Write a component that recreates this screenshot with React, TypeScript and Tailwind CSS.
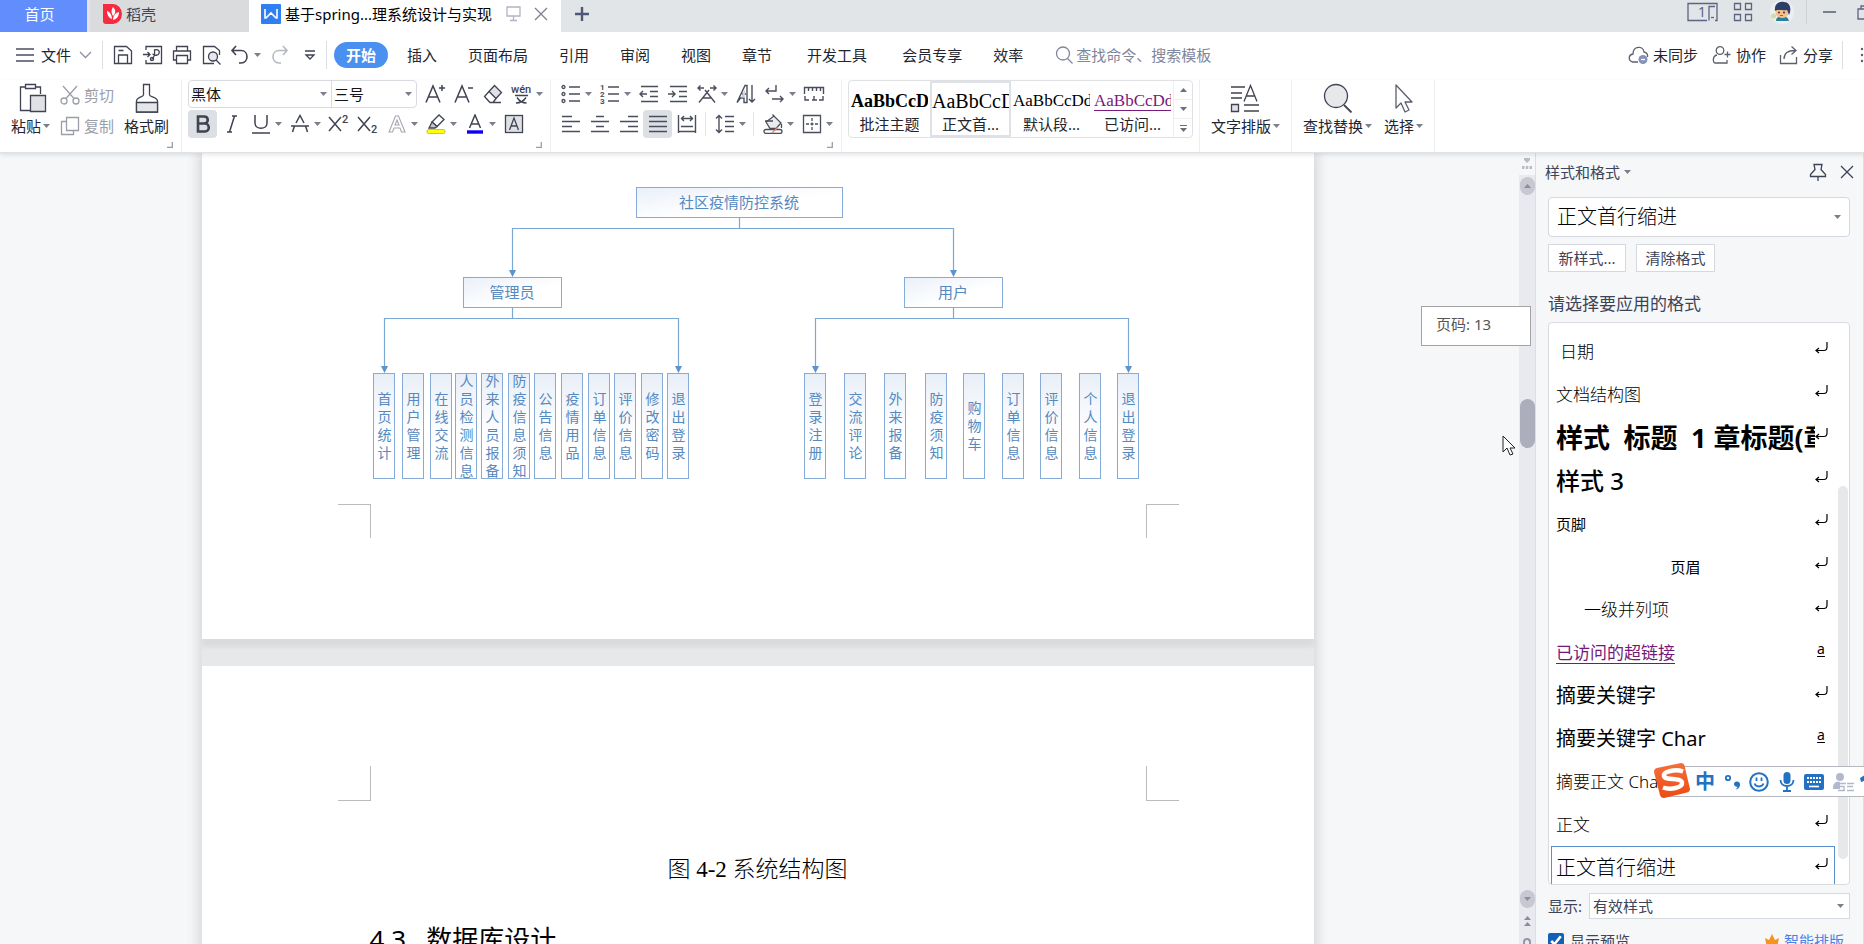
import type { ReactNode } from "react";

/* ---------- shared pieces ---------- */

function Svg({ children, w = 20, h = 20, className = "" }: { children: ReactNode; w?: number; h?: number; className?: string }) {
  return (
    <svg width={w} height={h} viewBox={`0 0 ${w} ${h}`} fill="none" stroke="currentColor" strokeWidth={1.3} className={`shrink-0 ${className}`} aria-hidden="true">
      {children}
    </svg>
  );
}

function Caret({ className = "text-[#7b7f8c]" }: { className?: string }) {
  return (
    <svg width="7" height="4" viewBox="0 0 7 4" className={`shrink-0 ${className}`} aria-hidden="true">
      <path d="M0 0h7L3.5 4z" fill="currentColor" />
    </svg>
  );
}

function Tool({ label, children, drop = false, active = false, className = "" }: { label: string; children: ReactNode; drop?: boolean; active?: boolean; className?: string }) {
  return (
    <div className="flex shrink-0 items-center">
      <button aria-label={label} className={`flex h-7 w-[29px] items-center justify-center ${active ? "rounded-sm bg-[#dcdfe4]" : ""} ${className}`}>
        {children}
      </button>
      {drop && (
        <span className="flex w-[10px] items-center">
          <Caret />
        </span>
      )}
    </div>
  );
}

function Sep() {
  return <span className="mx-1 h-6 w-px shrink-0 bg-[#e3e5e8]" />;
}

function Corner() {
  return (
    <svg width="6" height="6" viewBox="0 0 6 6" className="absolute right-2 bottom-1 text-[#9a9da8]" aria-hidden="true">
      <path d="M5.3 0v5.3H0" fill="none" stroke="currentColor" strokeWidth="1.3" />
    </svg>
  );
}

function BigTool({ label, children, drop = true }: { label: string; children: ReactNode; drop?: boolean }) {
  return (
    <button className="flex shrink-0 flex-col items-center gap-[3px] pt-[3px]">
      <span className="flex h-[30px] items-center">{children}</span>
      <span className="flex items-center gap-0.5 text-[15px] leading-5">
        {label}
        {drop && <Caret />}
      </span>
    </button>
  );
}

/* ---------- title bar ---------- */

function TitleBar() {
  return (
    <header className="flex h-8 shrink-0 items-stretch overflow-hidden bg-[#e2e5e7] text-[15px]">
      <button className="w-[87px] shrink-0 bg-[#618dfd] pr-2 pb-1 text-white">首页</button>
      <button className="ml-[3px] flex w-[159px] shrink-0 items-center gap-1 bg-[#dadbdd] pb-1 pl-[13px] text-[#3f4358]">
        <svg width="19" height="20" viewBox="0 0 19 20" aria-hidden="true">
          <path d="M0 0h10a9 10 0 0 1 0 20H3a3 3 0 0 1-3-3z" fill="#f9293f" />
          <path d="M10 3c3 3 3 6 0 9-2-3-2-6 0-9zM4 7c3 1 5 4 5 8-3-1-5-4-5-8zM16 8c0 4-2 7-6 8 0-4 2-7 6-8z" fill="#fff" />
        </svg>
        稻壳
      </button>
      <div className="flex w-[312px] shrink-0 items-center bg-white pb-1 pl-3">
        <svg width="20" height="20" viewBox="0 0 20 20" aria-hidden="true">
          <rect width="20" height="20" rx="1" fill="#2f7ff0" />
          <path d="M4 5v9h1l5-5 5 5h1V5" fill="none" stroke="#fff" strokeWidth="1.6" />
        </svg>
        <span className="ml-1 flex-1 whitespace-nowrap text-black">基于spring...理系统设计与实现</span>
        <Svg w={16} h={18} className="text-[#b1b5c2]">
          <path d="M1 2h13v9H1zM7.500 11v4M4 15.500h7" />
        </Svg>
        <button aria-label="关闭标签" className="mr-[13px] ml-3 text-[#7d8190]">
          <Svg w={14} h={14}>
            <path d="M1 1l12 12M13 1L1 13" />
          </Svg>
        </button>
      </div>
      <button aria-label="新建标签" className="ml-[13px] flex items-center pb-1 text-[#4d5878]">
        <Svg w={16} h={16}>
          <path d="M8 1v14M1 8h14" strokeWidth="2.400" />
        </Svg>
      </button>
      <div className="flex-1" />
      <div className="flex shrink-0 items-center pb-2 text-[#5d6480]">
        <Svg w={31} h={20}>
          <path d="M20 18.500H1v-17h29v17h-2M22 18.500v-14h6" />
          <text x="11" y="15" fontSize="14" fontFamily="Noto Sans" stroke="none" fill="currentColor">1</text>
          <path d="M24 15.500h3" />
        </Svg>
        <Svg w={20} h={20} className="ml-[15px]">
          <path d="M1.500 1.500h6v6h-6zM12.500 1.500h6v6h-6zM1.500 12.500h6v6h-6zM12.500 12.500h6v6h-6z" />
        </Svg>
        <svg width="24" height="24" viewBox="0 0 24 24" className="ml-[17px]" aria-label="头像">
          <circle cx="12" cy="12" r="12" fill="#eceef2" />
          <path d="M6 21c0-4 3-5 6-5s6 1 7 5z" fill="#2a7f9b" />
          <ellipse cx="12" cy="12.500" rx="6.500" ry="5.500" fill="#f3c28e" />
          <path d="M5 11C4 5 8 1 14 2c6 0 8 7 5 13-1-2-1-4-2-5-5 1-9-1-12 1z" fill="#2d3f68" />
          <circle cx="9" cy="12.500" r="1" fill="#5a2a2a" />
          <circle cx="14" cy="12.500" r="1" fill="#5a2a2a" />
          <path d="M10 15.500h3" stroke="#c0533a" />
          <circle cx="3.500" cy="16" r="2.500" fill="#c9dfa5" />
        </svg>
        <span className="ml-[12px] h-6 w-px bg-[#cfd2d7]" />
        <button aria-label="最小化" className="ml-4">
          <Svg w={14} h={14}>
            <path d="M0 7h13" strokeWidth="1.600" />
          </Svg>
        </button>
        <button aria-label="还原" className="-mr-2 ml-5">
          <Svg w={15} h={15}>
            <path d="M1 4h10v10H1zM4 4V1h10v10h-3" />
          </Svg>
        </button>
      </div>
    </header>
  );
}

/* ---------- menu row ---------- */

const menus: [string, string][] = [
  ["插入", ""],
  ["页面布局", ""],
  ["引用", ""],
  ["审阅", ""],
  ["视图", ""],
  ["章节", ""],
  ["开发工具", "ml-1"],
  ["会员专享", "ml-1"],
  ["效率", ""],
];

function MenuRow() {
  return (
    <nav className="flex h-12 shrink-0 items-center overflow-hidden pb-0.5 whitespace-nowrap text-[15px] text-[#22252f]">
      <button className="ml-4 flex items-center">
        <Svg w={18} h={16} className="text-[#4b4f5e]">
          <path d="M0 2h18M0 8h18M0 14h18" />
        </Svg>
        <span className="ml-[7px]">文件</span>
        <Svg w={13} h={8} className="ml-2 text-[#8e92a0]">
          <path d="M1 1l5.500 5.500L12 1" />
        </Svg>
      </button>
      <span className="ml-[10px] h-7 w-px bg-[#dcdee2]" />
      <div className="ml-[10px] flex items-center text-[#3f4352]">
        <button aria-label="保存">
          <Svg>
            <path d="M1.500 1.500h12l5 4.500v12.500h-17zM5.500 18v-8h9v8M5.500 5.500h5" />
          </Svg>
        </button>
        <button aria-label="输出为PDF" className="ml-[10px]">
          <Svg>
            <path d="M3 5V1.500h15.500v17H3V15M0 9.500h7M4.500 7L7 9.500 4.500 12M8.500 14.500c3-2 3.500-5 3-9.500 4-1 5.500 1 4.500 3.500s-4 2-6.500.5" />
            <circle cx="9" cy="14" r="1.600" />
          </Svg>
        </button>
        <button aria-label="打印" className="ml-[9px]">
          <Svg>
            <path d="M4.500 6V1.500h11V6M4.500 15h-3V6h17v9h-3M4.500 10.500h11v8h-11z" />
          </Svg>
        </button>
        <button aria-label="打印预览" className="ml-[10px]">
          <Svg>
            <path d="M12 18.500H1.500v-17h11l5 4V10" />
            <circle cx="11" cy="11.500" r="4.500" fill="#e6e8eb" />
            <path d="M14 15l4.500 4.500" />
          </Svg>
        </button>
        <button aria-label="撤销" className="ml-2 flex items-center gap-1">
          <Svg>
            <path d="M6 1L2 5.500l4 4.500M2 5.500h9c8 0 8 12.500 0 12.500H9" strokeWidth="1.600" />
          </Svg>
          <Caret />
        </button>
        <button aria-label="重做" className="ml-[9px] text-[#b6b9c2]">
          <Svg>
            <path d="M13 1l4 4.500-4 4.500M17 5.500H9c-8 0-8 12.500 0 12.500h2" strokeWidth="1.600" />
          </Svg>
        </button>
        <button aria-label="自定义工具栏" className="ml-[14px]">
          <Svg w={12} h={12}>
            <path d="M1 2h10M2 6h8l-4 4z" />
          </Svg>
        </button>
      </div>
      <span className="ml-[10px] h-7 w-px bg-[#dcdee2]" />
      <button className="ml-[7px] h-[26px] w-[54px] rounded-full bg-[#4a90f1] font-bold text-white">开始</button>
      <div className="ml-[19px] flex gap-[31px]">
        {menus.map(([name, cls]) => (
          <button key={name} className={cls}>
            {name}
          </button>
        ))}
      </div>
      <button className="ml-8 flex items-center text-[#7f869c]">
        <Svg>
          <circle cx="8" cy="8.500" r="6.500" />
          <path d="M12.500 13.500l5 5" />
        </Svg>
        <span className="ml-px">查找命令、搜索模板</span>
      </button>
      <div className="flex-1" />
      <button className="flex items-center gap-1">
        <Svg w={21} className="text-[#5b5f6e]">
          <path d="M10 17H5c-5-1-5-7 0-8C5 1 15 0 16 7c3 .5 4 3 3.500 5" />
          <circle cx="15" cy="14.500" r="4.500" fill="#8593bb" stroke="none" />
          <path d="M13 14.500h4" stroke="#fff" />
        </Svg>
        未同步
      </button>
      <button className="ml-[14px] flex items-center gap-[5px]">
        <Svg w={19} className="text-[#5b5f6e]">
          <circle cx="8" cy="5.500" r="3.800" />
          <path d="M5 10c-5 1-4 8-2 8h12v-3M12.500 9.500h6M15.500 6.500v6" />
        </Svg>
        协作
      </button>
      <button className="ml-[13px] flex items-center gap-[5px]">
        <Svg w={19} className="text-[#5b5f6e]">
          <path d="M1.500 10v8.500h16V12M5 14c0-6 4-8.500 11-8.500M12.500 1.500l4.500 4-4.500 4" />
        </Svg>
        分享
      </button>
      <span className="ml-[9px] h-7 w-px bg-[#dcdee2]" />
      <button aria-label="更多" className="-mr-px ml-4 text-[#5b5f6e]">
        <svg width="6" height="18" viewBox="0 0 6 18" fill="currentColor" aria-hidden="true">
          <circle cx="3" cy="3" r="1.200" />
          <circle cx="3" cy="9" r="1.200" />
          <circle cx="3" cy="15" r="1.200" />
        </svg>
      </button>
    </nav>
  );
}

/* ---------- ribbon ---------- */

function FontTools() {
  return (
    <section className="relative flex w-[369px] shrink-0 flex-col gap-0.5 border-r border-[#eceef1] pl-[6px] text-[#3f4352]">
      <div className="flex h-7 items-center">
        <div className="flex h-7 w-[229px] items-center rounded-sm border border-[#d9dbe0] text-[15px] text-[#14161c]">
          <div className="flex h-full w-[143px] items-center border-r border-[#d9dbe0] pr-1">
            <select aria-label="字体" className="h-full min-w-0 flex-1 appearance-none pl-0.5 outline-none">
              <option>黑体</option>
            </select>
            <Caret />
          </div>
          <div className="flex h-full flex-1 items-center pr-1">
            <select aria-label="字号" className="h-full min-w-0 flex-1 appearance-none pl-0.5 outline-none">
              <option>三号</option>
            </select>
            <Caret />
          </div>
        </div>
        <div className="ml-[3px] flex">
          <Tool label="增大字号">
            <Svg>
              <path d="M1 18.500L8 2l7 16.500M3.500 13h9M14 4h6M17 1v6" strokeWidth="1.500" />
            </Svg>
          </Tool>
          <Tool label="减小字号">
            <Svg>
              <path d="M1 18.500L8 2l7 16.500M3.500 13h9M14 4h5" strokeWidth="1.500" />
            </Svg>
          </Tool>
          <Tool label="清除格式">
            <Svg>
              <path d="M6 7.500l5.500-6 7 7-5.500 6z" fill="#dfe1e6" />
              <path d="M6 7.500l-4.500 5 5.500 6h3l3-4M8 18.500h10" />
            </Svg>
          </Tool>
          <Tool label="拼音指南" drop>
            <Svg w={22}>
              <text x="0" y="9" fontSize="11" fontFamily="Roboto" fontWeight="500" stroke="none" fill="currentColor">wén</text>
              <path d="M4 11.500h13M6 13.500c2 3 5 5.500 9.500 5.500M15 13.500c-2 3-5 5.500-10 5.500" strokeWidth="1.400" />
            </Svg>
          </Tool>
        </div>
      </div>
      <div className="flex">
        <Tool label="加粗" active>
          <Svg>
            <path d="M5 2.500h6c5 0 5 7 0 7H5zM5 9.500h7c5 0 5 8 0 8H5z" strokeWidth="2.600" />
          </Svg>
        </Tool>
        <Tool label="倾斜">
          <Svg>
            <path d="M10 2h5M5 18h5M12.500 2l-5 16" strokeWidth="1.500" />
          </Svg>
        </Tool>
        <Tool label="下划线" drop>
          <Svg>
            <path d="M4 1v8c0 7 12 7 12 0V1M1 19h18" strokeWidth="1.500" />
          </Svg>
        </Tool>
        <Tool label="删除线" drop>
          <Svg>
            <path d="M6 9l4-7.500L14 9M1 12h18M4.500 12L2.500 18M15.500 12l2 6" strokeWidth="1.500" />
          </Svg>
        </Tool>
        <Tool label="上标">
          <Svg w={22}>
            <path d="M1 3l12 14M13 3L1 17" strokeWidth="1.500" />
            <text x="14" y="9" fontSize="11" fontFamily="Roboto" fontWeight="500" stroke="none" fill="currentColor">2</text>
          </Svg>
        </Tool>
        <Tool label="下标">
          <Svg w={22}>
            <path d="M1 3l12 14M13 3L1 17" strokeWidth="1.500" />
            <text x="14" y="19" fontSize="11" fontFamily="Roboto" fontWeight="500" stroke="none" fill="currentColor">2</text>
          </Svg>
        </Tool>
        <Tool label="文字效果" drop className="text-[#a4a7b0]">
          <Svg>
            <path d="M2 18L8.500 2h3L18 18h-3.500l-1.500-4H7l-1.500 4zM8 11h4l-2-5z" strokeWidth="1.100" />
          </Svg>
        </Tool>
        <Tool label="突出显示" drop>
          <Svg w={22}>
            <path d="M7 8l7-7 5 4.500-7 7z" />
            <path d="M7 8l5 4.500-2 1.500H4z" fill="#c8cad2" />
            <rect x="2" y="15.500" width="18" height="4" rx="1.500" fill="#ffff00" stroke="#b9b930" strokeWidth=".8" />
          </Svg>
        </Tool>
        <Tool label="字体颜色" drop>
          <Svg>
            <path d="M4.500 14L10 1l5.500 13M6.500 10h7" strokeWidth="1.500" />
            <path d="M2 18h16" stroke="#0d00f2" strokeWidth="3.400" />
          </Svg>
        </Tool>
        <Tool label="字符底纹">
          <Svg>
            <rect x="1.500" y="1.500" width="17" height="17" fill="#dfe1e6" />
            <path d="M5.500 16L10 4l4.500 12M7 12h6" />
          </Svg>
        </Tool>
      </div>
      <Corner />
    </section>
  );
}

function ParagraphTools() {
  return (
    <section className="relative flex w-[291px] shrink-0 flex-col gap-0.5 border-r border-[#eceef1] pl-[5px] text-[#4a4e5c]">
      <div className="flex">
        <Tool label="项目符号" drop>
          <Svg>
            <path d="M8 3h11M8 10h11M8 17h11" strokeWidth="1.500" />
            <circle cx="2.500" cy="3" r="1.500" />
            <circle cx="2.500" cy="10" r="1.500" />
            <circle cx="2.500" cy="17" r="1.500" />
          </Svg>
        </Tool>
        <Tool label="编号" drop>
          <Svg>
            <path d="M8 3h11M8 10h11M8 17h11" strokeWidth="1.500" />
            <g fontSize="8" fontFamily="Roboto" fontWeight="700" stroke="none" fill="currentColor">
              <text x="0" y="6">1</text>
              <text x="0" y="13">2</text>
              <text x="0" y="20">3</text>
            </g>
          </Svg>
        </Tool>
        <Tool label="减少缩进">
          <Svg>
            <path d="M2 2.500h17M11 7.500h8M11 12.500h8M2 17.500h17M8 10H1M4 7l-3 3 3 3" strokeWidth="1.400" />
          </Svg>
        </Tool>
        <Tool label="增加缩进">
          <Svg>
            <path d="M2 2.500h17M11 7.500h8M11 12.500h8M2 17.500h17M0 10h7M4 7l3 3-3 3" strokeWidth="1.400" />
          </Svg>
        </Tool>
        <Tool label="中文版式" drop>
          <Svg>
            <path d="M2 18.500L12 6M18 18.500L8 6M5.500 14h9M1 4h6M3.500 1.500L1 4l2.500 2.500M13 4h6M16.500 1.500L19 4l-2.500 2.500" strokeWidth="1.400" />
          </Svg>
        </Tool>
        <Tool label="排序">
          <Svg>
            <path d="M1 18.500L9 1.500h2v17H8V14H4.500zM6 10h4M16 1v17M13 15l3 3 3-3" fill="none" strokeWidth="1.400" />
            <path d="M5 13.500L9 5v8.500z" fill="#cfd1d8" stroke="none" />
          </Svg>
        </Tool>
        <Tool label="换行" drop>
          <Svg>
            <path d="M11 1v6H1M4 4L1 7l3 3M7 15h11M15 12l3 3-3 3" strokeWidth="1.400" />
          </Svg>
        </Tool>
        <Tool label="制表位">
          <Svg w={22}>
            <path d="M1.500 10V3.500h19V10M5.500 4v3M9.500 4v3M13.500 4v3M17.500 4v3M2 12v4h4M11 12v4M9 16h5M20 12v4h-4" strokeWidth="1.400" />
          </Svg>
        </Tool>
      </div>
      <div className="flex items-center">
        <Tool label="左对齐">
          <Svg>
            <path d="M1 2.500h10M1 7.500h18M1 12.500h10M1 17.500h18" />
          </Svg>
        </Tool>
        <Tool label="居中">
          <Svg>
            <path d="M6 2.500h8M1 7.500h18M6 12.500h8M1 17.500h18" />
          </Svg>
        </Tool>
        <Tool label="右对齐">
          <Svg>
            <path d="M9 2.500h10M1 7.500h18M9 12.500h10M1 17.500h18" />
          </Svg>
        </Tool>
        <Tool label="两端对齐" active>
          <Svg>
            <path d="M1 2.500h18M1 7.500h18M1 12.500h18M1 17.500h18" strokeWidth="1.500" />
          </Svg>
        </Tool>
        <Tool label="分散对齐">
          <Svg>
            <path d="M1.500 1v18M18.500 1v18M4 4.500h12M7 2L4.500 4.500 7 7M13 2l2.500 2.500L13 7M4 12.500h12M1.500 17.500h17" strokeWidth="1.400" />
          </Svg>
        </Tool>
        <Sep />
        <Tool label="行距" drop>
          <Svg>
            <path d="M4 2v16M1 4.500l3-3 3 3M1 15.500l3 3 3-3M10 2.500h9M10 7.500h9M10 12.500h9M10 17.500h9" strokeWidth="1.400" />
          </Svg>
        </Tool>
        <Sep />
        <Tool label="底纹颜色" drop>
          <Svg>
            <path d="M3 8l8-6 7 7-5 5.500H7z" fill="#e9ebee" />
            <path d="M2 7h8M11 2L9.500.5M18.500 10v4" />
            <rect x="1" y="15.500" width="18" height="4" rx="2" fill="#fff" />
            <path d="M9 19l6-6" stroke="#e08070" />
          </Svg>
        </Tool>
        <Tool label="边框" drop>
          <Svg>
            <path d="M1.500 1.500h17v17h-17z" />
            <path d="M10 4v12M4 10h12" strokeDasharray="3 1.500" />
          </Svg>
        </Tool>
      </div>
      <Corner />
    </section>
  );
}

const gallery = [
  { label: "批注主题", sample: "AaBbCcD", cls: "text-[18px] font-bold text-black" },
  { label: "正文首...", sample: "AaBbCcD", cls: "text-[20px] text-black", selected: true },
  { label: "默认段...", sample: "AaBbCcDd", cls: "text-[17px] text-black" },
  { label: "已访问...", sample: "AaBbCcDd", cls: "text-[17px] text-[#7a1a7c] underline underline-offset-4" },
];

function Gallery() {
  return (
    <section className="shrink-0 border-r border-[#eceef1] pr-[6px] pl-[6px]">
      <div className="flex h-[58px] rounded-sm border border-[#dfe1e5]">
        {gallery.map((g) => (
          <button
            key={g.label}
            className={`flex w-[81px] flex-col items-center justify-between overflow-hidden border-2 pt-1 pb-0 ${g.selected ? "border-[#dee1e5]" : "border-transparent"}`}
          >
            <span className={`h-7 w-[77px] overflow-hidden text-left font-['Liberation_Serif',serif] leading-7 whitespace-nowrap ${g.cls}`}>{g.sample}</span>
            <span className="h-[22px] text-[15px] leading-5 text-[#22252f]">{g.label}</span>
          </button>
        ))}
        <div className="flex w-[19px] flex-col items-center border-l border-[#eceef1]">
          <button aria-label="上一行" className="flex w-full flex-1 items-center justify-center">
            <Caret className="rotate-180 text-[#6b6f7c]" />
          </button>
          <button aria-label="下一行" className="flex w-full flex-1 items-center justify-center border-y border-[#eceef1]">
            <Caret className="text-[#6b6f7c]" />
          </button>
          <button aria-label="更多样式" className="flex w-full flex-1 flex-col items-center justify-center gap-0.5">
            <span className="h-px w-[7px] bg-[#6b6f7c]" />
            <Caret className="text-[#6b6f7c]" />
          </button>
        </div>
      </div>
    </section>
  );
}

function Ribbon() {
  return (
    <div className="z-10 flex h-[73px] shrink-0 overflow-hidden border-b border-[#dfe1e5] text-[#22252f] shadow-[0_2px_4px_rgba(0,0,0,0.10)]">
      <section className="relative flex w-[182px] shrink-0 border-r border-[#eceef1] pl-[11px] whitespace-nowrap">
        <BigTool label="粘贴">
          <Svg w={28} h={30} className="ml-1 text-[#3f4352]">
            <path d="M11 27.500H1.500V4H6M17 4h4.500v7M6.500 1.500h10v4h-10z" />
            <path d="M11.500 12.500h15v16h-15z" fill="#dfe1e6" />
          </Svg>
        </BigTool>
        <div className="ml-[10px] flex flex-col gap-px text-[15px] text-[#9b9ea8]">
          <button className="flex h-[30px] items-center gap-1">
            <Svg>
              <circle cx="4" cy="16" r="3" />
              <circle cx="16" cy="16" r="3" />
              <path d="M3 1l11 12.500M17 1L6 13.500" />
            </Svg>
            剪切
          </button>
          <button className="flex h-[30px] items-center gap-1">
            <Svg>
              <path d="M6.500 1.500h12v13h-12zM6 5.500H1.500v13h12V15" />
            </Svg>
            复制
          </button>
        </div>
        <div className="ml-[10px] flex">
          <BigTool label="格式刷" drop={false}>
            <Svg w={24} h={30} className="text-[#3f4352]">
              <path d="M8.500 1.500h6V12c0 2 8 2 8 6v11h-21V18c0-4 7-4 7-6z" />
              <path d="M1.500 19.500h21V29h-21z" fill="#e4e6ea" />
            </Svg>
          </BigTool>
        </div>
        <Corner />
      </section>
      <FontTools />
      <ParagraphTools />
      <Gallery />
      <section className="flex w-[92px] shrink-0 justify-center border-r border-[#eceef1]">
        <BigTool label="文字排版">
          <Svg w={30} h={30} className="text-[#3f4352]">
            <path d="M1 4h14M1 10h11M1 15h11M14 18.500l6.500-16L27 18.500M16.500 13h8M14 22h15M14 28h15" />
            <path d="M1.500 21.500h7v7h-7z" fill="#dfe1e6" />
          </Svg>
        </BigTool>
      </section>
      <section className="flex w-[143px] shrink-0 gap-3 border-r border-[#eceef1] pl-[11px]">
        <BigTool label="查找替换">
          <Svg w={30} h={30} className="text-[#3f4352]">
            <circle cx="13" cy="13" r="11.500" fill="#e6e8eb" />
            <path d="M21 22l7.500 7.500" strokeWidth="1.800" />
          </Svg>
        </BigTool>
        <BigTool label="选择">
          <Svg w={20} h={30} className="text-[#5b5f6e]">
            <path d="M2 2v23l5-5 4 9 4-2-4-8h7z" strokeLinejoin="round" />
          </Svg>
        </BigTool>
      </section>
    </div>
  );
}

/* ---------- document ---------- */

const leafBox = "absolute top-[220px] flex h-[106px] w-[22px] items-center justify-center border border-[#86abd6] bg-linear-to-b from-[#e9eff8] to-white to-60% pl-0.5 text-center text-[14px] leading-[18px]";
const nodeBox = "absolute flex h-[31px] items-center justify-center border border-[#86abd6] bg-linear-to-br from-[#eaf0f9] to-white to-60% text-[15px]";

const leaves: { x: number; text: string }[] = [
  { x: 171, text: "首页统计" },
  { x: 200, text: "用户管理" },
  { x: 228, text: "在线交流" },
  { x: 253, text: "人员检测信息" },
  { x: 279, text: "外来人员报备" },
  { x: 306, text: "防疫信息须知" },
  { x: 332, text: "公告信息" },
  { x: 359, text: "疫情用品" },
  { x: 386, text: "订单信息" },
  { x: 412, text: "评价信息" },
  { x: 439, text: "修改密码" },
  { x: 465, text: "退出登录" },
  { x: 602, text: "登录注册" },
  { x: 642, text: "交流评论" },
  { x: 682, text: "外来报备" },
  { x: 723, text: "防疫须知" },
  { x: 761, text: "购物车" },
  { x: 800, text: "订单信息" },
  { x: 838, text: "评价信息" },
  { x: 877, text: "个人信息" },
  { x: 915, text: "退出登录" },
];

function Diagram() {
  return (
    <figure className="relative h-[340px] w-full text-[#5589c0]">
      <svg width="1112" height="340" viewBox="0 0 1112 340" className="absolute inset-0" fill="none" stroke="#7ba7d4" aria-hidden="true">
        <path d="M537.500 64v11.500M310.500 117V75.500h441V117M310.500 154v11.500M182.500 213v-47.500h294V213M751.500 154v11.500M613.500 213v-47.500h313V213" strokeWidth="1.200" />
        <path d="M307 117h7l-3.500 7zM748 117h7l-3.500 7zM179 213h7l-3.500 7zM473 213h7l-3.500 7zM610 213h7l-3.500 7zM923 213h7l-3.500 7z" fill="#5b93cf" stroke="none" />
      </svg>
      <div className={`${nodeBox} top-[34px] left-[434px] w-[207px]`}>社区疫情防控系统</div>
      <div className={`${nodeBox} top-[124px] left-[261px] w-[99px]`}>管理员</div>
      <div className={`${nodeBox} top-[124px] left-[702px] w-[99px]`}>用户</div>
      {leaves.map((l) => (
        <div key={l.x} className={leafBox} style={{ left: l.x }}>
          <span className="w-[14px] break-all">{l.text}</span>
        </div>
      ))}
    </figure>
  );
}

function Document() {
  return (
    <main className="flex min-w-0 flex-1 flex-col overflow-hidden bg-[#f5f7f9] pr-1">
      <div className="mx-auto flex w-full max-w-[1112px] shrink-0 flex-col bg-[#e7e8ea] shadow-[0_0_12px_4px_rgba(0,0,0,0.12)]">
        <article className="bg-white pb-[101px] shadow-[0_8px_4px_#dadbdd]">
          <Diagram />
          <div className="mt-[11px] flex justify-between pr-[135px] pl-[136px]">
            <span className="h-[34px] w-[33px] border-t border-r border-[#b9bbbf]" />
            <span className="h-[34px] w-[33px] border-t border-l border-[#b9bbbf]" />
          </div>
        </article>
        <article className="mt-[27px] bg-white pt-[100px] pb-24 text-black">
          <div className="flex justify-between pr-[135px] pl-[136px]">
            <span className="h-[35px] w-[33px] border-r border-b border-[#b9bbbf]" />
            <span className="h-[35px] w-[33px] border-b border-l border-[#b9bbbf]" />
          </div>
          <p className="mt-[53px] text-center font-['Liberation_Serif','Noto_Sans_CJK_SC',serif] text-[23px] leading-8 font-light">图 4-2 系统结构图</p>
          <h2 className="mt-[35px] ml-[168px] flex gap-[20px] text-[26px] leading-9">
            <span>4.3</span>
            <span>数据库设计</span>
          </h2>
        </article>
      </div>
    </main>
  );
}

function ScrollColumn() {
  return (
    <aside className="flex w-[17px] shrink-0 flex-col items-center border-r border-[#dcdee4] bg-[#e9eaf0]">
      <button aria-label="拆分窗口" className="flex h-[22px] w-full items-center justify-center bg-[#f5f7f9] text-[#b9bbc5]">
        <svg width="12" height="12" viewBox="0 0 12 12" fill="currentColor" aria-hidden="true">
          <path d="M3 0h6v2L6 5 3 2zM1 8h2.500v3H1zM4.800 8h2.500v3H4.800zM8.600 8H11v3H8.600z" />
        </svg>
      </button>
      <button aria-label="向上滚动" className="mt-0.5 flex h-[18px] w-[15px] items-center justify-center rounded-full bg-[#c7c8d2]">
        <Caret className="rotate-180 text-[#8b8d9b]" />
      </button>
      <div className="flex w-[15px] flex-1 flex-col">
        <div className="basis-[29.3%]" />
        <div className="h-[49px] rounded-full bg-[#adaebc]" />
      </div>
      <button aria-label="向下滚动" className="flex h-[18px] w-[15px] items-center justify-center rounded-full bg-[#c7c8d2]">
        <Caret className="text-[#8b8d9b]" />
      </button>
      <button aria-label="上一页" className="mt-2 flex flex-col items-center gap-0.5 text-[#8b8d9b]">
        <Caret className="rotate-180 text-[#8b8d9b]" />
        <Caret className="rotate-180 text-[#8b8d9b]" />
      </button>
      <button aria-label="选择浏览对象" className="mt-3 h-[6px] w-2 rounded-t border-2 border-b-0 border-[#9698a5]" />
    </aside>
  );
}

/* ---------- styles panel ---------- */

const styles: { name: string; cls: string; mark: "p" | "a" | "" }[] = [
  { name: "日期", cls: "pl-1 text-[17px] font-light", mark: "p" },
  { name: "文档结构图", cls: "text-[17px] font-light", mark: "p" },
  { name: "样式\u2002标题\u20021 章标题(章)", cls: "text-[27px] font-bold", mark: "p" },
  { name: "样式 3", cls: "text-[24px] font-medium", mark: "p" },
  { name: "页脚", cls: "text-[15px]", mark: "p" },
  { name: "页眉", cls: "text-center text-[15px]", mark: "p" },
  { name: "一级并列项", cls: "pl-7 text-[17px] font-light", mark: "p" },
  { name: "已访问的超链接", cls: "text-[17px] text-[#76187a] underline underline-offset-4", mark: "a" },
  { name: "摘要关键字", cls: "text-[20px]", mark: "p" },
  { name: "摘要关键字 Char", cls: "text-[20px]", mark: "a" },
  { name: "摘要正文 Char", cls: "text-[17px] font-light", mark: "" },
  { name: "正文", cls: "text-[17px] font-light", mark: "p" },
  { name: "正文首行缩进", cls: "text-[20px] font-light", mark: "p" },
];

function StylesPanel() {
  return (
    <aside className="flex w-[328px] shrink-0 flex-col overflow-hidden border-r border-[#dcdee4] bg-[#f5f7f9] pr-[13px] pl-3 whitespace-nowrap text-[#3e4357]">
      <div className="-ml-[3px] flex h-[38px] items-center text-[15px]">
        <button className="flex items-center gap-1">
          样式和格式
          <Caret />
        </button>
        <div className="flex-1" />
        <button aria-label="固定面板">
          <Svg w={18} h={18}>
            <path d="M5 1.500h8l-1 5 4.500 5v2h-15v-2l4.500-5zM9 13.500V18" />
          </Svg>
        </button>
        <button aria-label="关闭面板" className="-mr-1 ml-[13px]">
          <Svg w={14} h={14}>
            <path d="M1 1l12 12M13 1L1 13" />
          </Svg>
        </button>
      </div>
      <div className="relative mt-[6px]">
        <select aria-label="当前样式" className="block h-10 w-full appearance-none rounded-sm border border-[#d5d8de] bg-white pl-2 text-[20px] font-light text-black">
          <option>正文首行缩进</option>
        </select>
        <span className="pointer-events-none absolute top-[18px] right-[9px]">
          <Caret />
        </span>
      </div>
      <div className="mt-[7px] flex gap-[10px] text-[15px]">
        <button className="h-7 w-[78px] border border-[#d5d8de] bg-white">新样式...</button>
        <button className="h-7 w-[79px] border border-[#d5d8de] bg-white">清除格式</button>
      </div>
      <h3 className="mt-5 text-[17px] leading-6">请选择要应用的格式</h3>
      <div className="mt-[6px] flex min-h-0 flex-1 overflow-hidden rounded-sm border border-[#d9dbe1] bg-white">
        <ul className="min-w-0 flex-1 pt-[7px] pr-[3px] pl-0.5 text-black">
          {styles.map((s, i) => (
            <li key={s.name} className={`flex h-[43px] items-center border pr-[7px] pl-1 ${i === styles.length - 1 ? "border-[#5a8fd0]" : "border-transparent"}`}>
              <span className={`min-w-0 flex-1 overflow-hidden leading-10 ${s.cls}`}>{s.name}</span>
              <span className="flex w-3 shrink-0 justify-center pb-2">
                {s.mark === "p" && (
                  <Svg w={13} h={12} className="text-black">
                    <path d="M12 0v5c0 2-1 3.500-3 3.500H1M4 6L1 8.500 4 11" strokeWidth="1.200" />
                  </Svg>
                )}
                {s.mark === "a" && <span className="text-[14px] leading-4 underline underline-offset-2">a</span>}
              </span>
            </li>
          ))}
        </ul>
        <div className="flex w-[11px] shrink-0 flex-col pb-[25px]">
          <div className="basis-[163px]" />
          <div className="w-[10px] flex-1 rounded-full bg-[#e7e8ea]" />
        </div>
      </div>
      <div className="mt-2 flex items-center gap-[7px] text-[15px]">
        <label htmlFor="show-filter">显示:</label>
        <div className="relative flex-1">
          <select id="show-filter" className="block h-[26px] w-full appearance-none border border-[#d5d8de] bg-white pl-[3px]">
            <option>有效样式</option>
          </select>
          <span className="pointer-events-none absolute top-[11px] right-[6px]">
            <Caret />
          </span>
        </div>
      </div>
      <div className="mt-[10px] -mb-[9px] flex items-center text-[15px] leading-6">
        <label className="flex items-center gap-[6px]">
          <input type="checkbox" defaultChecked className="h-4 w-4 accent-[#0f62b8]" />
          显示预览
        </label>
        <div className="flex-1" />
        <a href="#smart" className="mr-[6px] flex items-center gap-1 text-[#4a80e8]">
          <svg width="16" height="14" viewBox="0 0 16 14" aria-hidden="true">
            <path d="M1 4l4 2 3-6 3 6 4-2-2 10H3z" fill="#f7941d" />
          </svg>
          智能排版
        </a>
      </div>
    </aside>
  );
}

/* ---------- floating pieces ---------- */

function PageTip() {
  return <div className="absolute top-[306px] right-[333px] flex h-[40px] w-[110px] items-center border border-[#a3a3a3] bg-white pb-1 pl-[14px] text-[15px] text-[#565656]">页码: 13</div>;
}

function Pointer() {
  return (
    <svg width="14" height="22" viewBox="0 0 14 22" className="absolute top-[435px] right-[348px]" aria-hidden="true">
      <path d="M1 1v16l4-4 3 7 3-1-3-6h5z" fill="#fff" stroke="#222" />
    </svg>
  );
}

function InputBar() {
  return (
    <div className="absolute top-[766px] right-0 flex h-[31px] w-[196px] items-center overflow-visible border border-r-0 border-[#b4b8be] bg-white text-[#2272c3]">
      <svg width="38" height="38" viewBox="0 0 38 38" className="absolute -top-[5px] -left-[16px]" aria-label="输入法">
        <defs>
          <linearGradient id="ime" x1="0" y1="0" x2="0" y2="1">
            <stop offset="0" stopColor="#f4703c" />
            <stop offset="1" stopColor="#ee4a12" />
          </linearGradient>
        </defs>
        <path d="M4 6L28 1c2 0 3 1 3.500 2.500L37 27c0 2-1 3-3 3.500L11 36c-2 0-3.500-1-4-3L1 10c0-2 1-3.500 3-4z" fill="url(#ime)" />
        <path d="M30 9.500C23 7 10 9 11 14c1 5 17 1 18 6.500 1 5.500-12 7.500-19 5" fill="none" stroke="#fff" strokeWidth="4.500" />
      </svg>
      <div className="flex items-center pl-[26px]">
        <span className="text-[20px] leading-5 font-bold">中</span>
        <Svg w={18} h={18} className="ml-[9px]">
          <circle cx="4" cy="5" r="2.200" strokeWidth="1.800" />
          <path d="M13 8.500a2.600 2.600 0 1 0 .5 5c-.3 1.500-1 2.200-2 3 3.500-.5 4.500-3 4.500-5.200a2.700 2.700 0 0 0-3-2.800z" fill="currentColor" stroke="none" />
        </Svg>
        <Svg w={20} h={20} className="ml-[7px]">
          <circle cx="10" cy="10" r="8.800" strokeWidth="2" />
          <path d="M7.500 5.500v3.500M12.500 5.500v3.500M5.500 11.500c1.500 4 7.500 4 9 0" strokeWidth="1.800" />
        </Svg>
        <Svg w={16} h={20} className="ml-[10px]">
          <rect x="4.500" y="0" width="7" height="12" rx="3.500" fill="currentColor" stroke="none" />
          <path d="M1.500 8c0 8 13 8 13 0M8 14v5M4 19h8" strokeWidth="1.800" />
        </Svg>
        <Svg w={20} h={18} className="ml-[9px]">
          <rect x="0" y="1" width="20" height="16" rx="2" fill="currentColor" stroke="none" />
          <path d="M3 5h14M3 9h14" stroke="#fff" strokeWidth="2.200" strokeDasharray="2 1" />
          <path d="M5 13.500h10" stroke="#fff" strokeWidth="1.600" />
        </Svg>
        <Svg w={21} h={20} className="ml-[9px] text-[#b3b9cc]">
          <circle cx="7" cy="5" r="4" fill="currentColor" stroke="none" />
          <path d="M0 16c0-6 4-7 7-6v7H0z" fill="currentColor" stroke="none" />
          <path d="M7 11.500h6M14 11.500h7M7 14.500h4v4M14 14.500h6M5 18.500h7M14 18.500h7" />
        </Svg>
        <Svg w={10} h={18} className="ml-[6px]">
          <path d="M0 5l5-3h5v14H4V8L1 9z" fill="currentColor" stroke="none" />
        </Svg>
      </div>
    </div>
  );
}

export default function App() {
  return (
    <div className="relative flex h-screen flex-col overflow-hidden bg-white font-['Noto_Sans','Noto_Sans_CJK_SC',sans-serif]">
      <TitleBar />
      <MenuRow />
      <Ribbon />
      <div className="flex min-h-0 flex-1">
        <Document />
        <ScrollColumn />
        <StylesPanel />
      </div>
      <PageTip />
      <Pointer />
      <InputBar />
    </div>
  );
}
